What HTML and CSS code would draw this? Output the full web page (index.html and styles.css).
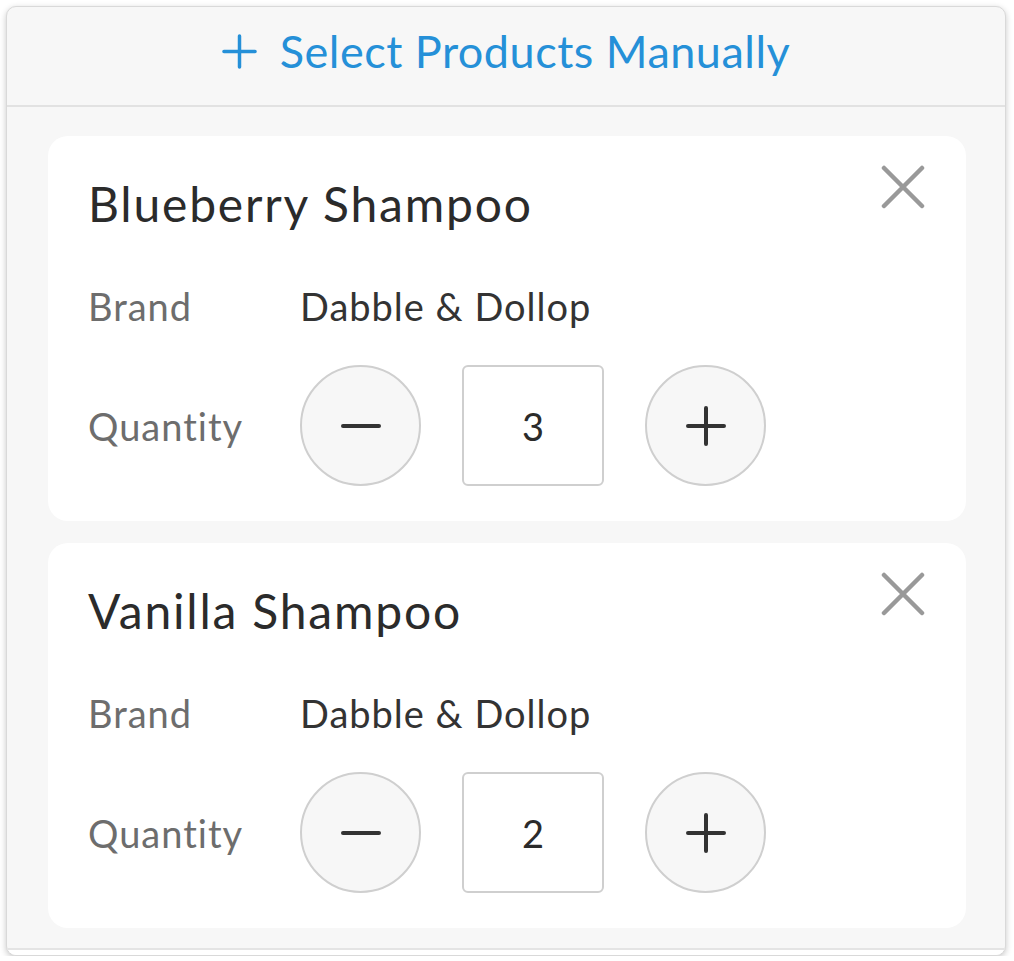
FILE: index.html
```html
<!DOCTYPE html>
<html>
<head>
<meta charset="utf-8">
<link rel="stylesheet" href="styles.css">
</head>
<body>
<div class="panel">
  <div class="header">
    <a class="select-link" href="#">
      <svg class="plus-icon" viewBox="0 0 36 36" width="35" height="35"><path d="M18 2v32M2 18h32" stroke="#2590d8" stroke-width="3.6" stroke-linecap="round" fill="none"/></svg>
      <span>Select Products Manually</span>
    </a>
  </div>
  <div class="list">
    <div class="card">
      <button class="close" aria-label="Remove"><svg viewBox="0 0 44 44" width="44" height="44"><path d="M3 3L41 41M41 3L3 41" stroke="#999" stroke-width="4.5" stroke-linecap="round" fill="none"/></svg></button>
      <h2 class="title">Blueberry Shampoo</h2>
      <div class="row brand-row">
        <span class="label">Brand</span>
        <span class="value">Dabble &amp; Dollop</span>
      </div>
      <div class="row qty-row">
        <span class="label">Quantity</span>
        <div class="stepper">
          <button class="circle"><svg viewBox="0 0 40 40" width="40" height="40"><path d="M2 20h36" stroke="#333" stroke-width="4" stroke-linecap="round"/></svg></button>
          <div class="qty-box">3</div>
          <button class="circle"><svg viewBox="0 0 40 40" width="40" height="40"><path d="M2 20h36M20 2v36" stroke="#333" stroke-width="4" stroke-linecap="round"/></svg></button>
        </div>
      </div>
    </div>
    <div class="card">
      <button class="close" aria-label="Remove"><svg viewBox="0 0 44 44" width="44" height="44"><path d="M3 3L41 41M41 3L3 41" stroke="#999" stroke-width="4.5" stroke-linecap="round" fill="none"/></svg></button>
      <h2 class="title">Vanilla Shampoo</h2>
      <div class="row brand-row">
        <span class="label">Brand</span>
        <span class="value">Dabble &amp; Dollop</span>
      </div>
      <div class="row qty-row">
        <span class="label">Quantity</span>
        <div class="stepper">
          <button class="circle"><svg viewBox="0 0 40 40" width="40" height="40"><path d="M2 20h36" stroke="#333" stroke-width="4" stroke-linecap="round"/></svg></button>
          <div class="qty-box">2</div>
          <button class="circle"><svg viewBox="0 0 40 40" width="40" height="40"><path d="M2 20h36M20 2v36" stroke="#333" stroke-width="4" stroke-linecap="round"/></svg></button>
        </div>
      </div>
    </div>
  </div>
  <div class="footer"></div>
</div>
</body>
</html>
```
FILE: styles.css
```css
* { box-sizing: border-box; }
html, body { margin: 0; padding: 0; background: #ffffff; }
body { font-family: "Lato", "Noto Sans", sans-serif; }

.panel {
  margin: 6px 8px 0 6px;
  width: 1000px;
  background: #f7f7f7;
  border: 1px solid #d9d9d9;
  border-radius: 10px;
  box-shadow: 0 2px 6px rgba(0,0,0,0.22);
  overflow: hidden;
}

.header {
  height: 100px;
  border-bottom: 2px solid #e2e2e2;
  display: flex;
  align-items: center;
  justify-content: center;
}
.select-link {
  display: flex;
  align-items: center;
  gap: 23px;
  color: #2590d8;
  text-decoration: none;
  font-size: 45px;
  letter-spacing: 0.5px;
  line-height: 1;
  padding-bottom: 10px;
}
.plus-icon { display: block; }

.list {
  padding: 29px 39px 20px 41px;
  display: flex;
  flex-direction: column;
  gap: 22px;
  border-bottom: 2px solid #e4e4e4;
}

.card {
  position: relative;
  background: #ffffff;
  border-radius: 20px;
  padding: 40px 42px 35px 40px;
}
.close {
  position: absolute;
  top: 29px;
  right: 41px;
  width: 44px;
  height: 44px;
  padding: 0;
  border: 0;
  background: none;
}
.close svg { display: block; }

.title {
  margin: 0;
  font-weight: 400;
  font-size: 48px;
  letter-spacing: 1.8px;
  line-height: 56px;
  color: #2b2b2b;
}

.row {
  display: grid;
  grid-template-columns: 212px auto;
  align-items: center;
}
.brand-row { margin-top: 46px; height: 56px; }
.qty-row { margin-top: 31px; }

.label { font-size: 38px; letter-spacing: 1px; color: #6d6d6d; }
.value { font-size: 38px; letter-spacing: 1px; color: #333333; }

.stepper {
  display: flex;
  align-items: center;
  gap: 41px;
}
.circle {
  width: 121px;
  height: 121px;
  border-radius: 50%;
  border: 2px solid #cfcfcf;
  background: #f7f7f7;
  display: flex;
  align-items: center;
  justify-content: center;
  padding: 0;
}
.circle svg { display: block; }
.qty-box {
  width: 142px;
  height: 121px;
  border: 2px solid #cfcfcf;
  border-radius: 6px;
  background: #fff;
  display: flex;
  align-items: center;
  justify-content: center;
  font-size: 38px;
  color: #2b2b2b;
}

.footer {
  height: 5px;
  background: #ffffff;
}
```
